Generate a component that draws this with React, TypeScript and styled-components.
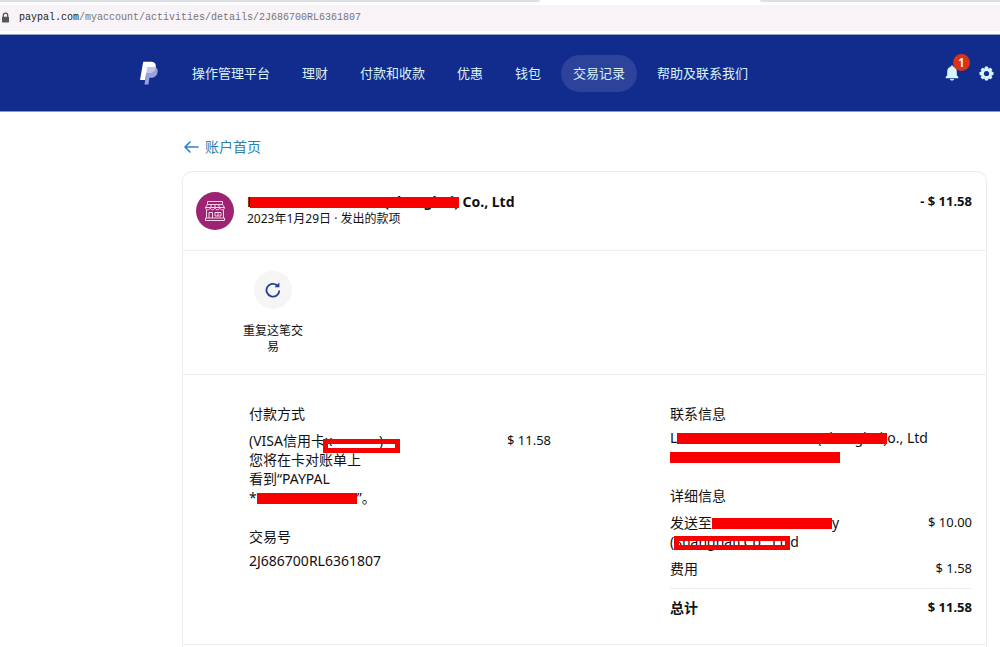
import React from 'react';
import styled, { createGlobalStyle } from 'styled-components';

const GlobalStyle = createGlobalStyle`
  *, *::before, *::after { box-sizing: border-box; }
  body {
    margin: 0;
    background: #fff;
    color: #111;
    font-family: 'Noto Sans', 'Noto Sans CJK SC', sans-serif;
    font-size: 14px;
    line-height: 19px;
  }
  h1, h2, p { margin: 0; padding: 0; font-size: inherit; font-weight: inherit; }
  a { color: inherit; text-decoration: none; }
  button { border: 0; padding: 0; background: none; color: inherit; font: inherit; cursor: pointer; }
`;

const Page = styled.div`
  display: flex;
  flex-direction: column;
  min-height: 100vh;
`;

const TabStrip = styled.div`
  display: flex;
  justify-content: space-between;
  height: 5px;
  background: #fff;
`;

const TabEdge = styled.div<{ $share: number; $side: 'left' | 'right' }>`
  width: ${(p) => p.$share}%;
  height: 2px;
  background: #dde1e6;
  border-radius: ${(p) => (p.$side === 'left' ? '0 0 4px 0' : '0 0 0 4px')};
`;

const AddressBar = styled.div`
  display: flex;
  align-items: center;
  gap: 9px;
  height: 26px;
  padding-left: 1px;
  margin-bottom: 3px;
  background: #f7f3f6;
  color: #77737a;
  font: 10px/26px 'Liberation Mono', monospace;

  b { color: #222; font-weight: 400; }
`;

const Nav = styled.header`
  display: flex;
  align-items: center;
  height: 78px;
  padding: 0 6px 0 139px;
  border-top: 1px solid #93a3cf;
  border-bottom: 1px solid #8c9ab5;
  background: #112c8c;
  color: #d9f3f8;
`;

const Menu = styled.nav`
  display: flex;
  flex: 1;
  gap: 8px;
  margin-left: 21px;
`;

const MenuItem = styled.a<{ $active?: boolean }>`
  padding: 0 12px;
  border-radius: 19px;
  background: ${(p) => (p.$active ? '#2c429b' : 'transparent')};
  font-size: 13px;
  line-height: 37px;
  white-space: nowrap;
`;

const Tools = styled.div`
  display: flex;
  align-items: center;
  gap: 20px;
`;

const ToolButton = styled.button`
  position: relative;
  display: flex;
`;

const Badge = styled.span`
  position: absolute;
  top: -11px;
  left: 8px;
  width: 17px;
  height: 17px;
  border-radius: 50%;
  background: #d9341a;
  color: #fff;
  font-size: 12px;
  font-weight: 600;
  line-height: 17px;
  text-align: center;
`;

const Main = styled.main`
  display: flex;
  flex: 1;
  flex-direction: column;
  padding: 25px 13px 0 182px;
`;

const BackLink = styled.a`
  display: flex;
  align-items: center;
  align-self: flex-start;
  gap: 6px;
  margin-bottom: 15px;
  padding-left: 2px;
  color: #2f7fae;
  line-height: 19px;
`;

const Card = styled.article`
  flex: 1;
  border: 1px solid #ececec;
  border-bottom: 0;
  border-radius: 10px 10px 0 0;
`;

const Summary = styled.header`
  display: flex;
  align-items: flex-start;
  height: 79px;
  padding: 20px 14px 0 13px;
  border-bottom: 1px solid #eee;
`;

const Avatar = styled.div`
  display: flex;
  align-items: center;
  justify-content: center;
  width: 38px;
  height: 38px;
  margin-right: 13px;
  border-radius: 50%;
  background: #9c2473;
`;

const SummaryText = styled.div`
  flex: 1;
`;

const Merchant = styled.h1`
  font-weight: 700;
  white-space: nowrap;
`;

const Meta = styled.p`
  font-size: 12px;
  line-height: 16px;
`;

const Amount = styled.span<{ $bold?: boolean }>`
  font-size: 13px;
  font-weight: ${(p) => (p.$bold ? 700 : 400)};
  white-space: nowrap;
`;

const Actions = styled.section`
  height: 124px;
  padding: 20px 0 0 60px;
  border-bottom: 1px solid #eee;
`;

const RepeatButton = styled.button`
  display: flex;
  flex-direction: column;
  align-items: center;
  gap: 14px;
  width: 60px;
  font-size: 12px;
  line-height: 16px;
`;

const RepeatIcon = styled.span`
  display: flex;
  align-items: center;
  justify-content: center;
  width: 38px;
  height: 38px;
  border-radius: 50%;
  background: #f5f5f6;
`;

const Details = styled.section`
  display: grid;
  grid-template-columns: 302px 302px;
  justify-content: space-between;
  padding: 29px 14px 27px 66px;
  border-bottom: 1px solid #eee;
`;

const Group = styled.section`
  & + & { margin-top: 20px; }
`;

const Label = styled.h2<{ $gap: number }>`
  margin-bottom: ${(p) => p.$gap}px;
`;

const Row = styled.div`
  display: flex;
  justify-content: space-between;
  white-space: nowrap;
  & + & { margin-top: 8px; }
`;

const TotalRow = styled(Row)`
  && { margin-top: 10px; }
  padding-top: 9px;
  border-top: 1px solid #eee;
  font-weight: 700;
`;

const MailLink = styled.a`
  display: block;
  color: #2a5db0;
`;

const Redacted = styled.span<{ $width: number; $top?: number; $bleed?: number; $outline?: boolean; $align?: string }>`
  position: relative;
  display: inline-block;
  width: ${(p) => p.$width}px;
  height: 19px;
  vertical-align: top;
  text-align: ${(p) => p.$align || 'right'};

  &::after {
    content: '';
    position: absolute;
    left: -${(p) => p.$bleed || 0}px;
    right: 0;
    top: ${(p) => p.$top || 5}px;
    height: ${(p) => (p.$outline ? 14 : 11)}px;
    border: ${(p) => (p.$outline ? 5 : 0)}px solid #f80000;
    background: ${(p) => (p.$outline ? 'transparent' : '#f80000')};
  }
`;

const menu = ['操作管理平台', '理财', '付款和收款', '优惠', '钱包', '交易记录', '帮助及联系我们'];

const LockIcon = () => (
  <svg width="9" height="12" viewBox="0 0 9 12" aria-hidden="true">
    <path d="M2.3 6V3.3a2.2 2.2 0 0 1 4.4 0V6" fill="none" stroke="#55555b" strokeWidth="1.3" />
    <rect x="1" y="4.8" width="7" height="5.7" rx=".8" fill="#55555b" />
  </svg>
);

const PayPalLogo = () => (
  <svg width="20" height="24" viewBox="0 0 20 24" role="img" aria-label="PayPal">
    <path d="M8 6h7.5c2.8.8 3.7 3 3 5.6-.8 3.8-3.2 5.200-6.5 5.200h-1.600L9.400 23.500H5.500L6.300 18z" fill="#99a0dd" />
    <path d="M4.200.8h7.500c3.900 0 5.600 2.200 5 5.500-.8 4-3.500 5.700-7.300 5.700H7.200L6 19H1z" fill="#fff" />
    <path d="M8.300 6h8.400c-.5 4.300-3.300 6-7.300 6H7.300z" fill="#bfc5ea" />
  </svg>
);

const BellIcon = () => (
  <svg width="14" height="16" viewBox="0 0 14 16" aria-hidden="true">
    <path d="M7 .5c.8 0 1.300.5 1.300 1.200C10.800 2.400 11.800 4.300 11.800 6.800v3.400L13.300 12v1.300H.7V12l1.500-1.800V6.800c0-2.500 1-4.400 3.500-5.100C5.700 1 6.200.5 7 .5zM5 14h4c-.2 1-1 1.600-2 1.600S5.200 15 5 14z" fill="#d9f3fb" />
  </svg>
);

const GearIcon = () => (
  <svg width="15" height="15" viewBox="-7.500 -7.500 15 15" aria-hidden="true">
    <g fill="#d9f3fb">
      {[0, 45, 90, 135].map((a) => (
        <rect key={a} x="-1.700" y="-7" width="3.400" height="14" rx=".8" transform={`rotate(${a})`} />
      ))}
      <circle r="5.600" />
    </g>
    <circle r="2.600" fill="#112c8c" />
  </svg>
);

const ArrowIcon = () => (
  <svg width="15" height="12" viewBox="0 0 15 12" fill="none" stroke="#2d7fd3" strokeWidth="1.600" strokeLinecap="round" strokeLinejoin="round" aria-hidden="true">
    <path d="M14 6H1M6 1L1 6l5 5" />
  </svg>
);

const StoreIcon = () => (
  <svg width="20" height="20" viewBox="0 0 20 20" fill="none" stroke="#f3d5e8" strokeWidth="1" aria-hidden="true">
    <path d="M2.500.5h15v3h-15zM2.500 3.500L.5 6.500h19l-2-3M6.500 3.500l-1 3M10 3.500v3M13.500 3.500l1 3" />
    <path d="M.5 6.500c0 3 4.500 3 4.750 0 .25 3 4.500 3 4.750 0 .25 3 4.500 3 4.750 0 .25 3 4.750 3 4.750 0M1.500 9v8M18.500 9v8M.5 17h19v2.500H.5z" />
    <path d="M4 17v-5.500h3.500V17M10 11.500h6v3.500h-6zM13 11.500V15" />
  </svg>
);

const RefreshIcon = () => (
  <svg width="16" height="16" viewBox="0 0 16 16" fill="none" stroke="#23408e" strokeWidth="1.800" aria-hidden="true">
    <path d="M14.300 8.500A6.400 6.400 0 1 1 12.200 3.500" />
    <path d="M9.500 5.300h4.900V.6z" fill="#23408e" stroke="none" />
  </svg>
);

export default function App() {
  return (
    <Page>
      <GlobalStyle />
      <TabStrip>
        <TabEdge $share={54} $side="left" />
        <TabEdge $share={24} $side="right" />
      </TabStrip>
      <AddressBar>
        <LockIcon />
        <span><b>paypal.com</b>/myaccount/activities/details/2J686700RL6361807</span>
      </AddressBar>
      <Nav>
        <PayPalLogo />
        <Menu>
          {menu.map((item) => (
            <MenuItem key={item} href="#" $active={item === '交易记录'}>{item}</MenuItem>
          ))}
        </Menu>
        <Tools>
          <ToolButton aria-label="通知"><BellIcon /><Badge>1</Badge></ToolButton>
          <ToolButton aria-label="设置"><GearIcon /></ToolButton>
        </Tools>
      </Nav>
      <Main>
        <BackLink href="#"><ArrowIcon />账户首页</BackLink>
        <Card>
          <Summary>
            <Avatar><StoreIcon /></Avatar>
            <SummaryText>
              <Merchant>L<Redacted $width={204} $bleed={5}>(Shanghai)</Redacted> Co., Ltd</Merchant>
              <Meta>2023年1月29日 · 发出的款项</Meta>
            </SummaryText>
            <Amount $bold>- $ 11.58</Amount>
          </Summary>
          <Actions>
            <RepeatButton>
              <RepeatIcon><RefreshIcon /></RepeatIcon>
              重复这笔交易
            </RepeatButton>
          </Actions>
          <Details>
            <div>
              <Group>
                <Label $gap={8}>付款方式</Label>
                <Row>
                  <p>
                    (VISA信用卡<Redacted $width={75} $top={8} $bleed={2} $outline $align="left">{'x-\u2003\u2003\u2003)'}</Redacted>
                    <br />您将在卡对账单上
                    <br />看到“PAYPAL
                    <br />*<Redacted $width={100} />”。
                  </p>
                  <Amount>$ 11.58</Amount>
                </Row>
              </Group>
              <Group>
                <Label $gap={5}>交易号</Label>
                <p>2J686700RL6361807</p>
              </Group>
            </div>
            <div>
              <Group>
                <Label $gap={5}>联系信息</Label>
                <p>L<Redacted $width={210}>(Shanghai)</Redacted>o., Ltd</p>
                <MailLink href="#" aria-label="电子邮件"><Redacted $width={170} /></MailLink>
              </Group>
              <Group>
                <Label $gap={8}>详细信息</Label>
                <Row>
                  <p>
                    发送至<Redacted $width={120} />y
                    <br />(<Redacted $width={116} $top={4} $outline $align="left">Shanghai) Co., Lt</Redacted>d
                  </p>
                  <Amount>$ 10.00</Amount>
                </Row>
                <Row><span>费用</span><Amount>$ 1.58</Amount></Row>
                <TotalRow><span>总计</span><Amount $bold>$ 11.58</Amount></TotalRow>
              </Group>
            </div>
          </Details>
        </Card>
      </Main>
    </Page>
  );
}
